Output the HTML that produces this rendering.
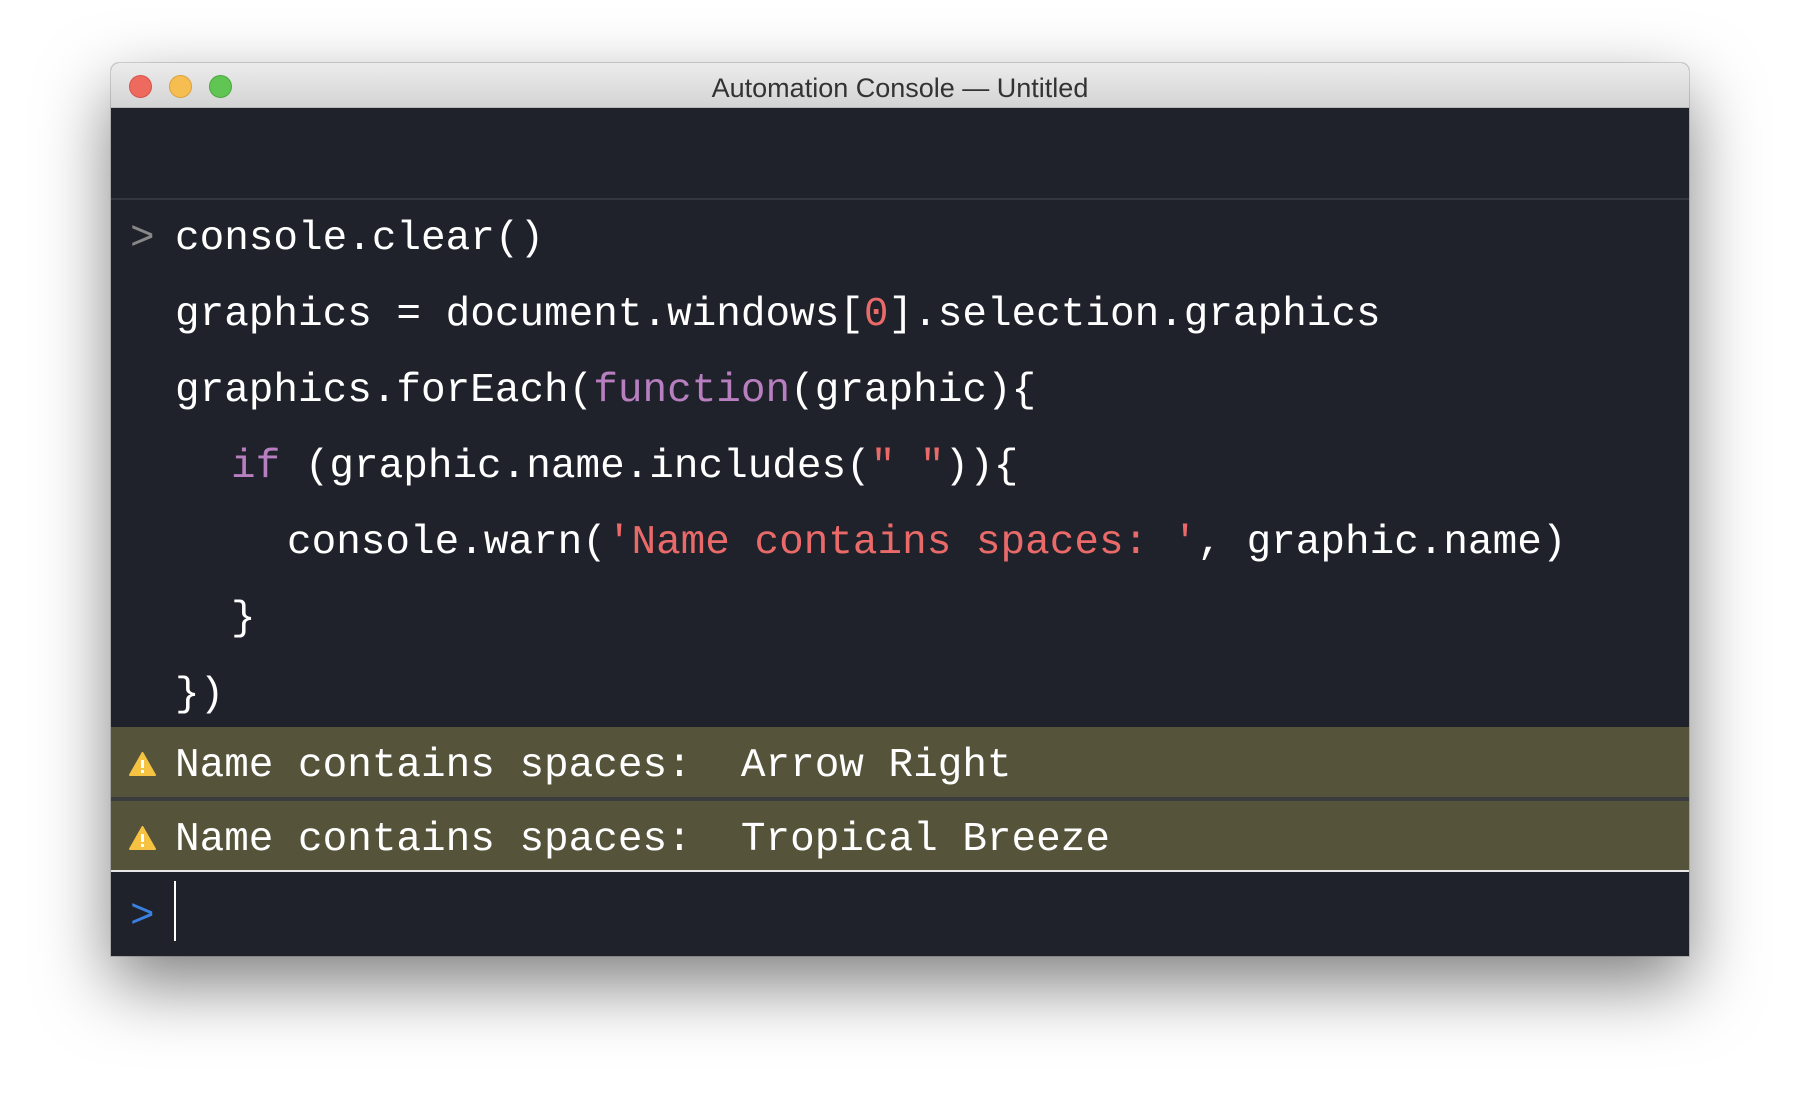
<!DOCTYPE html>
<html><head><meta charset="utf-8"><style>
html,body{margin:0;padding:0;width:1802px;height:1116px;background:#fff;overflow:hidden}
.win{position:absolute;left:111px;top:63px;width:1578px;height:893px;background:#1f222a;border-radius:8px 8px 0 0;box-shadow:0 28px 70px rgba(0,0,0,.5),0 0 0 1px rgba(0,0,0,.15);overflow:hidden}
.tb{position:absolute;left:0;top:0;right:0;height:44px;background:linear-gradient(#ececec,#d4d4d4);border-bottom:1px solid #b8b8b8;text-align:center;font:27px "Liberation Sans",sans-serif;color:#333;line-height:50px}
.dot{position:absolute;top:12px;width:21px;height:21px;border-radius:50%}
.sep{position:absolute;left:0;right:0;top:135px;height:2px;background:#33363d}
.code{position:absolute;left:0;top:4px;font:41px "Liberation Mono",monospace;color:#fff;white-space:pre}
.l{position:absolute;height:76px;line-height:76px}
.k{color:#b87fc0}.s{color:#ea6a6a}
.warn{position:absolute;left:0;right:0;height:70px;background:#555339;font:41px "Liberation Mono",monospace;color:#fff;line-height:78px;white-space:pre}
</style></head><body>
<div class="win">
<div class="tb">Automation Console — Untitled
<div class="dot" style="left:18px;background:#ee6a5e;border:1px solid #d55448"></div>
<div class="dot" style="left:58px;background:#f6be50;border:1px solid #dba13a"></div>
<div class="dot" style="left:98px;background:#61c554;border:1px solid #4aa83e"></div>
</div>
<div class="sep"></div>
<div class="code">
<div class="l" style="top:134px;left:19px;color:#888">&gt;</div>
<div class="l" style="top:134px;left:64px">console.clear()</div>
<div class="l" style="top:210px;left:64px">graphics = document.windows[<span class="s">0</span>].selection.graphics</div>
<div class="l" style="top:286px;left:64px">graphics.forEach(<span class="k">function</span>(graphic){</div>
<div class="l" style="top:362px;left:120px"><span class="k">if</span> (graphic.name.includes(<span class="s">" "</span>)){</div>
<div class="l" style="top:438px;left:176px">console.warn(<span class="s">'Name contains spaces: '</span>, graphic.name)</div>
<div class="l" style="top:514px;left:120px">}</div>
<div class="l" style="top:590px;left:64px">})</div>
</div>
<div class="warn" style="top:664px"><svg style="position:absolute;left:18px;top:25px" width="27" height="24" viewBox="0 0 27 24"><path d="M13.5 1 L26 23 L1 23 Z" fill="#f5c242" stroke="#f5c242" stroke-linejoin="round" stroke-width="2"/><rect x="12" y="8" width="3" height="8" fill="#fff"/><rect x="12" y="18" width="3" height="3" fill="#fff"/></svg><span style="position:absolute;left:64px">Name contains spaces:  Arrow Right</span></div>
<div class="warn" style="top:738px"><svg style="position:absolute;left:18px;top:25px" width="27" height="24" viewBox="0 0 27 24"><path d="M13.5 1 L26 23 L1 23 Z" fill="#f5c242" stroke="#f5c242" stroke-linejoin="round" stroke-width="2"/><rect x="12" y="8" width="3" height="8" fill="#fff"/><rect x="12" y="18" width="3" height="3" fill="#fff"/></svg><span style="position:absolute;left:64px">Name contains spaces:  Tropical Breeze</span></div>
<div style="position:absolute;left:0;right:0;top:734px;height:4px;background:#3a3c3f"></div>
<div style="position:absolute;left:0;right:0;top:807px;height:2px;background:#e8e8e8"></div>
<div style="position:absolute;left:19px;top:816px;font:41px 'Liberation Mono',monospace;color:#3a80e0;line-height:76px">&gt;</div>
<div style="position:absolute;left:63px;top:818px;width:2px;height:60px;background:#fff"></div>
</div>
</body></html>
